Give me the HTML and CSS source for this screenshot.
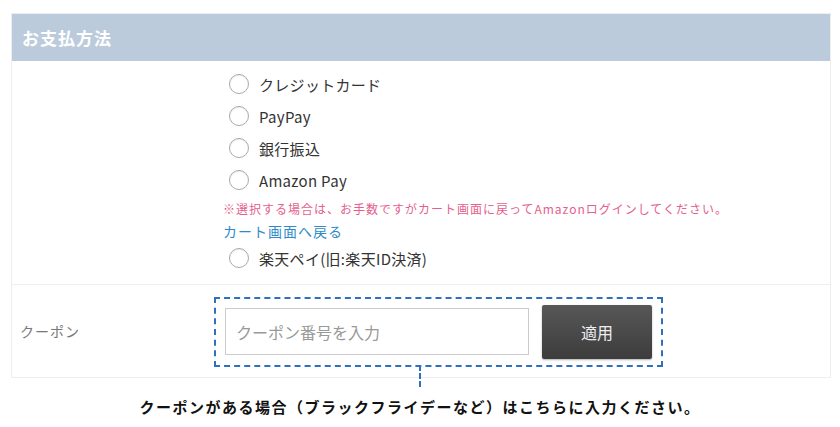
FILE: index.html
```html
<!DOCTYPE html>
<html lang="ja">
<head>
    <meta charset="UTF-8">
    <meta name="viewport" content="width=device-width, initial-scale=1.0">
    <title>お支払方法</title>
    <link rel="stylesheet" href="styles.css">
</head>
<body>

    <div class="panel">
        <div class="panel-head">お支払方法</div>

        <div class="pay-list">
            <label class="pay-item"><input type="radio" name="pay"><span class="dot"></span>クレジットカード</label>
            <label class="pay-item"><input type="radio" name="pay"><span class="dot"></span>PayPay</label>
            <label class="pay-item"><input type="radio" name="pay"><span class="dot"></span>銀行振込</label>
            <label class="pay-item"><input type="radio" name="pay"><span class="dot"></span>Amazon Pay</label>
            <p class="pay-note">※選択する場合は、お手数ですがカート画面に戻ってAmazonログインしてください。</p>
            <a class="pay-link" href="#">カート画面へ戻る</a>
            <label class="pay-item"><input type="radio" name="pay"><span class="dot"></span>楽天ペイ(旧:楽天ID決済)</label>
        </div>

        <div class="coupon-row">
            <div class="coupon-label">クーポン</div>
            <!-- 点線の枠と下の案内文への線 -->
            <div class="coupon-box">
                <input type="text" class="coupon-input" placeholder="クーポン番号を入力">
                <button class="coupon-btn">適用</button>
            </div>
        </div>
    </div>

    <p class="coupon-caption">クーポンがある場合（ブラックフライデーなど）はこちらに入力ください。</p>

</body>
</html>
```

FILE: styles.css
```css
body {
    margin: 0;
    font-family: "Noto Sans CJK JP", "Noto Sans", sans-serif;
    color: #333;
    background: #fff;
}
.panel {
    width: 818px;
    margin: 13px 0 0 11px;
    border: 1px solid #eee;
}
.panel-head {
    height: 47px;
    line-height: 47px;
    padding-left: 10px;
    background-color: #bccbdb;
    color: #fff;
    font-size: 17px;
    font-weight: bold;
    letter-spacing: 1px;
}
.pay-list {
    padding: 7px 0 10px 217px;
}
.pay-item {
    display: flex;
    align-items: center;
    height: 32px;
    font-size: 15px;
    letter-spacing: 0.3px;
    color: #333;
    cursor: pointer;
}
.pay-item input {
    display: none;
}
/* 丸いラジオボタン */
.dot {
    width: 18px;
    height: 18px;
    margin-right: 10px;
    border: 1px solid #aaa;
    border-radius: 50%;
    box-shadow: inset 0 1px 1px rgba(0, 0, 0, 0.08);
}
.pay-note {
    margin: 2px 0 0 -6px;
    height: 22px;
    line-height: 22px;
    font-size: 12px;
    letter-spacing: 1px;
    color: #e5608c;
}
.pay-link {
    display: block;
    margin-left: -6px;
    height: 22px;
    line-height: 22px;
    font-size: 14px;
    letter-spacing: 1px;
    color: #2d8bc9;
    text-decoration: none;
}
.coupon-row {
    display: flex;
    align-items: center;
    height: 92px;
    border-top: 1px solid #eee;
}
.coupon-label {
    width: 194px;
    padding-left: 8px;
    font-size: 14px;
    letter-spacing: 1px;
    color: #777;
}
.coupon-box {
    position: relative;
    display: flex;
    align-items: center;
    gap: 13px;
    padding: 6px 9px;
    border: 2px dashed #2f6fc0;
    margin-top: 1px;
}
.coupon-box::after {
    content: "";
    position: absolute;
    left: 203px;
    top: 100%;
    height: 22px;
    border-left: 2px dashed #2f6fc0;
}
.coupon-input {
    width: 304px;
    height: 47px;
    box-sizing: border-box;
    padding: 0 10px;
    border: 1px solid #ccc;
    font-family: inherit;
    font-size: 16px;
    color: #333;
}
.coupon-input::placeholder {
    color: #999;
}
.coupon-btn {
    width: 110px;
    height: 54px;
    border: none;
    border-radius: 2px;
    background: linear-gradient(#575757, #3c3c3c);
    box-shadow: 0 1px 2px rgba(0, 0, 0, 0.3);
    color: #eee;
    font-family: inherit;
    font-size: 16px;
    cursor: pointer;
}
.coupon-caption {
    margin: 18px 0 0;
    text-align: center;
    font-size: 15px;
    font-weight: bold;
    letter-spacing: 1.5px;
    color: #111;
}
```
